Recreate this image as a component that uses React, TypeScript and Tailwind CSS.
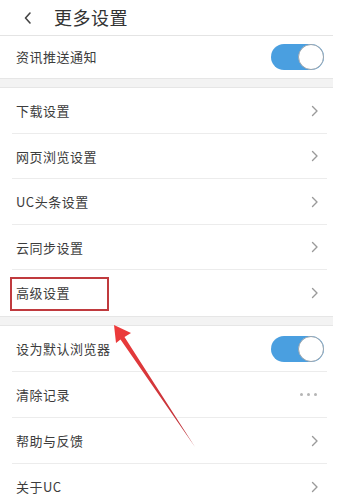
import React from "react";

function Chevron() {
  return (
    <svg width="8" height="12" viewBox="0 0 8 12" className="text-[#9a9a9a] mr-[-1px]">
      <path d="M1.5 1.5 L6 6 L1.5 10.5" fill="none" stroke="currentColor" strokeWidth="1.4" strokeLinecap="round" strokeLinejoin="round" />
    </svg>
  );
}

function Toggle() {
  return (
    <div className="relative w-[53px] h-[26px] rounded-full bg-[#4a9fe0] mr-[-6px]">
      <div className="absolute right-0 top-0 w-[26px] h-[26px] rounded-full bg-white border border-[#9aa4ad]" />
    </div>
  );
}

function Dots() {
  return (
    <div className="flex gap-[4px] pr-[1px]">
      <span className="w-[3px] h-[3px] rounded-full bg-[#b5b5b5]" />
      <span className="w-[3px] h-[3px] rounded-full bg-[#b5b5b5]" />
      <span className="w-[3px] h-[3px] rounded-full bg-[#b5b5b5]" />
    </div>
  );
}

type Row = { label: string; right: "chevron" | "toggle" | "dots"; last?: boolean };

function SettingRow({ label, right, last, h }: Row & { h: string }) {
  return (
    <div className={`${h} flex items-center justify-between pl-[16px] pr-[15px] relative`}>
      <span className="text-[13px] text-[#3c3c3c] tracking-[0.5px]">{label}</span>
      <div className="flex items-center">
        {right === "chevron" && <Chevron />}
        {right === "toggle" && <Toggle />}
        {right === "dots" && <Dots />}
      </div>
      {!last && <div className="absolute left-[12px] right-[6px] bottom-0 h-px bg-[#ececec]" />}
    </div>
  );
}

function Band() {
  return <div className="h-[10px] bg-[#f3f3f3] border-y border-[#e6e6e6]" />;
}

export default function App() {
  const groupA: Row[] = [
    { label: "下载设置", right: "chevron" },
    { label: "网页浏览设置", right: "chevron" },
    { label: "UC头条设置", right: "chevron" },
    { label: "云同步设置", right: "chevron" },
    { label: "高级设置", right: "chevron", last: true },
  ];
  const groupB: Row[] = [
    { label: "设为默认浏览器", right: "toggle" },
    { label: "清除记录", right: "dots" },
    { label: "帮助与反馈", right: "chevron" },
    { label: "关于UC", right: "chevron", last: true },
  ];

  return (
    <div className="w-[353px] h-[501px] bg-white overflow-hidden relative" style={{ fontFamily: '"Noto Sans CJK SC", "Noto Sans", sans-serif' }}>
      <div className="w-[333px]">
        {/* header */}
        <div className="h-[36px] flex items-center border-b border-[#e4e4e4]">
          <svg width="10" height="14" viewBox="0 0 10 14" className="ml-[23px] text-[#444]">
            <path d="M7 2 L2.5 7 L7 12" fill="none" stroke="currentColor" strokeWidth="1.6" strokeLinecap="round" strokeLinejoin="round" />
          </svg>
          <span className="ml-[21px] text-[18px] text-[#333] tracking-[0.5px]">更多设置</span>
        </div>

        <SettingRow label="资讯推送通知" right="toggle" last h="h-[42px]" />
        <Band />

        {groupA.map((r) => (
          <SettingRow key={r.label} {...r} h="h-[45.5px]" />
        ))}
        <Band />

        {groupB.map((r) => (
          <SettingRow key={r.label} {...r} h="h-[46px]" />
        ))}
      </div>

      {/* annotation: red box */}
      <div className="absolute left-[10px] top-[277px] w-[99px] h-[34px] border-2 border-[#c03a3e]" />

      {/* annotation: arrow */}
      <svg className="absolute left-0 top-0 pointer-events-none" width="353" height="501" viewBox="0 0 353 501">
        <defs>
          <linearGradient id="arw" x1="114" y1="325" x2="195" y2="447" gradientUnits="userSpaceOnUse">
            <stop offset="0" stopColor="#ef3b3b" />
            <stop offset="1" stopColor="#b8323a" />
          </linearGradient>
        </defs>
        <polygon points="114,325 131,333 124.5,337 195,447 120.5,339.5 116,343" fill="url(#arw)" />
      </svg>
    </div>
  );
}
